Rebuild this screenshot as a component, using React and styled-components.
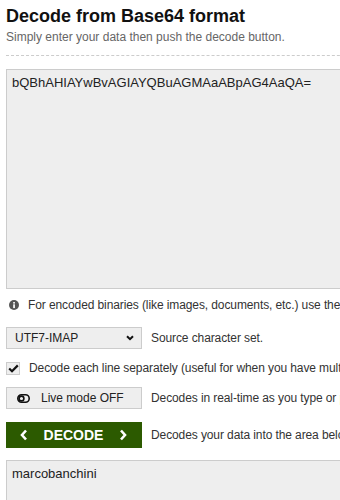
import React, { useState } from "react";
import styled, { createGlobalStyle } from "styled-components";

const GlobalStyle = createGlobalStyle`
  html, body {
    margin: 0;
    overflow: hidden;
    background: #fff;
    font-family: "Liberation Sans", Arial, sans-serif;
  }
`;

const Page = styled.div`
  width: 760px;
  padding: 6px 0 0 6px;
  color: #222;
`;

const Title = styled.h1`
  margin: 0;
  font-size: 18px;
  line-height: 20px;
  font-weight: bold;
  color: #111;
`;

const Subtitle = styled.p`
  margin: 3px 0 0;
  font-size: 12px;
  line-height: 16px;
  color: #666;
`;

const Divider = styled.hr`
  margin: 10px 0 0;
  border: 0;
  border-top: 1px dashed #ccc;
  height: 0;
`;

const DataArea = styled.textarea`
  display: block;
  box-sizing: border-box;
  width: 740px;
  height: ${(p) => p.$height}px;
  margin-top: ${(p) => p.$top}px;
  padding: 5px;
  border: 1px solid #ccc;
  background: #eee;
  color: #222;
  font-family: "Liberation Sans", Arial, sans-serif;
  font-size: 13px;
  resize: none;
  outline: none;
`;

const Row = styled.div`
  display: flex;
  align-items: center;
  gap: ${(p) => p.$gap || 9}px;
  margin-top: ${(p) => p.$top}px;
  white-space: nowrap;
`;

const Note = styled.span`
  font-size: 12px;
  line-height: 16px;
  letter-spacing: -0.1px;
  color: #333;
`;

const InfoIcon = styled.svg`
  width: 10px;
  height: 10px;
  margin-left: 3px;
  margin-right: 1px;
  flex: none;
`;

const Control = styled.div`
  box-sizing: border-box;
  width: 136px;
  height: ${(p) => p.$height || 22}px;
  flex: none;
  display: flex;
  align-items: center;
  border: 1px solid #ccc;
  background: #eee;
  font-size: 12px;
  color: #222;
  cursor: pointer;
`;

const SelectBox = styled(Control)`
  justify-content: space-between;
  padding: 0 7px 0 8px;
`;

const LiveButton = styled(Control)`
  gap: 11px;
  padding-left: 10px;
`;

const DecodeButton = styled.button`
  box-sizing: border-box;
  width: 136px;
  height: 26px;
  flex: none;
  display: flex;
  align-items: center;
  justify-content: space-between;
  padding: 0 15px 0 14px;
  border: 0;
  background: #2c5a00;
  color: #fff;
  font-family: "Liberation Sans", Arial, sans-serif;
  font-size: 14px;
  font-weight: bold;
  cursor: pointer;
`;

const CheckBox = styled.span`
  box-sizing: border-box;
  width: 14px;
  height: 13px;
  margin-left: 0;
  flex: none;
  display: flex;
  align-items: center;
  justify-content: center;
  border: 1px solid #ccc;
  background: #eee;
`;

function Chevron({ dir }) {
  const d = dir === "left" ? "M6 1.5 L2 6 L6 10.5" : "M2 1.5 L6 6 L2 10.5";
  return (
    <svg width="8" height="12" viewBox="0 0 8 12">
      <path d={d} fill="none" stroke="#fff" strokeWidth="2.6" strokeLinejoin="miter" />
    </svg>
  );
}

export default function App() {
  const [perLine, setPerLine] = useState(true);
  return (
    <Page>
      <GlobalStyle />
      <Title>Decode from Base64 format</Title>
      <Subtitle>Simply enter your data then push the decode button.</Subtitle>
      <Divider />
      <DataArea $top={13} $height={220} defaultValue="bQBhAHIAYwBvAGIAYQBuAGMAaABpAG4AaQA=" />

      <Row $top={8} $gap={8}>
        <InfoIcon viewBox="0 0 10 10">
          <circle cx="5" cy="5" r="5" fill="#555" />
          <rect x="4.2" y="2" width="1.7" height="1.6" fill="#fff" />
          <rect x="4.2" y="4.3" width="1.7" height="3.8" fill="#fff" />
        </InfoIcon>
        <Note>For encoded binaries (like images, documents, etc.) use the file upload form a little further down on this page.</Note>
      </Row>

      <Row $top={14}>
        <SelectBox>
          <span>UTF7-IMAP</span>
          <svg width="8" height="6" viewBox="0 0 8 6">
            <path d="M1 1.2 L4 4.2 L7 1.2" fill="none" stroke="#111" strokeWidth="2" />
          </svg>
        </SelectBox>
        <Note>Source character set.</Note>
      </Row>

      <Row $top={11} onClick={() => setPerLine(!perLine)}>
        <CheckBox>
          {perLine && (
            <svg width="11" height="9" viewBox="0 0 11 9">
              <path d="M1.2 4.5 L4 7.2 L9.8 1.4" fill="none" stroke="#111" strokeWidth="2.2" />
            </svg>
          )}
        </CheckBox>
        <Note>Decode each line separately (useful for when you have multiple entries).</Note>
      </Row>

      <Row $top={11}>
        <LiveButton $height={22}>
          <svg width="13" height="9" viewBox="0 0 13 9">
            <rect x="0.8" y="0.8" width="11.4" height="7.4" rx="3.7" fill="none" stroke="#111" strokeWidth="1.6" />
            <circle cx="4.5" cy="4.5" r="2.4" fill="none" stroke="#111" strokeWidth="1.6" />
          </svg>
          <span>Live mode OFF</span>
        </LiveButton>
        <Note>Decodes in real-time as you type or paste (supports only the UTF-8 character set).</Note>
      </Row>

      <Row $top={13}>
        <DecodeButton>
          <Chevron dir="left" />
          <span>DECODE</span>
          <Chevron dir="right" />
        </DecodeButton>
        <Note>Decodes your data into the area below.</Note>
      </Row>

      <DataArea $top={12} $height={200} defaultValue="marcobanchini" />
    </Page>
  );
}
